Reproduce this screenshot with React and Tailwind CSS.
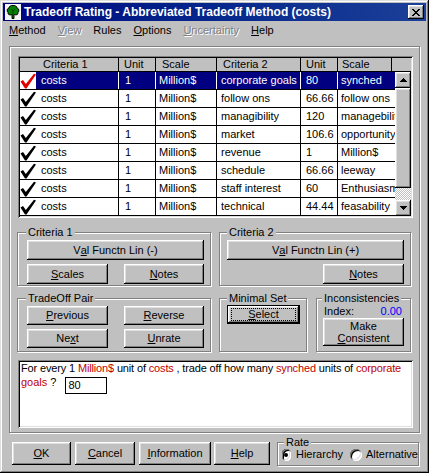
import React from "react";

const raised =
  "bg-[#c0c0c0] shadow-[inset_-1px_-1px_#000,inset_1px_1px_#fff,inset_-2px_-2px_#808080,inset_2px_2px_#dfdfdf]";
const sunken =
  "shadow-[inset_1px_1px_#808080,inset_-1px_-1px_#fff,inset_2px_2px_#000,inset_-2px_-2px_#dfdfdf]";
const etched = "border border-[#808080] shadow-[inset_1px_1px_#fff,1px_1px_#fff]";
const disabled = "text-[#808080] [text-shadow:1px_1px_#fff]";

const rows = [
  { c2: "corporate goals", u2: "80", s2: "synched", sel: true },
  { c2: "follow ons", u2: "66.66", s2: "follow ons" },
  { c2: "managibility", u2: "120", s2: "managebility" },
  { c2: "market", u2: "106.6", s2: "opportunity" },
  { c2: "revenue", u2: "1", s2: "Million$" },
  { c2: "schedule", u2: "66.66", s2: "leeway" },
  { c2: "staff interest", u2: "60", s2: "Enthusiasm" },
  { c2: "technical", u2: "44.44", s2: "feasability" },
];

function Btn({ className = "", children }) {
  return (
    <div className={`${raised} flex items-center justify-center text-black ${className}`}>
      {children}
    </div>
  );
}

function Group({ label, className = "", labelClass = "ml-[8px]", children }) {
  return (
    <div className={`${etched} ${className}`}>
      <div className={`-mt-[7px] ${labelClass} w-fit px-[2px] bg-[#c0c0c0] leading-[13px]`}>{label}</div>
      {children}
    </div>
  );
}

function Check({ red }) {
  return (
    <svg width="16" height="16" viewBox="0 0 16 16">
      <path
        d="M0.5 8.5 L3 7 L5.8 11 L14 0.8 L16 1.5 L6.5 15.5 L5 15.5 Z"
        fill={red ? "#e00000" : "#000"}
      />
    </svg>
  );
}

function Arrow({ down }) {
  return (
    <svg width="7" height="4" viewBox="0 0 7 4" shapeRendering="crispEdges">
      <path
        d={
          down
            ? "M0 0h7v1H0zM1 1h5v1H1zM2 2h3v1H2zM3 3h1v1H3z"
            : "M3 0h1v1H3zM2 1h3v1H2zM1 2h5v1H1zM0 3h7v1H0z"
        }
        fill="#000"
      />
    </svg>
  );
}

function Radio({ checked }) {
  return (
    <div className="w-[12px] h-[12px] rounded-full bg-white shadow-[inset_1px_1px_#808080,inset_-1px_-1px_#fff,inset_2px_2px_#000,inset_-2px_-2px_#dfdfdf] flex items-center justify-center">
      {checked && <div className="w-[4px] h-[4px] rounded-full bg-black" />}
    </div>
  );
}

function Row({ r }) {
  const cell = r.sel ? "bg-[#000080] text-white border-r border-white" : "border-r border-black";
  const last = r.sel ? "bg-[#000080] text-white" : "";
  return (
    <div className="flex h-[18px] border-b border-black bg-white leading-[17px] whitespace-nowrap">
      <div className="w-[16px] flex items-center justify-center bg-white">
        <Check red={r.sel} />
      </div>
      <div className={`w-[83px] pl-[5px] ${cell}`}>costs</div>
      <div className={`w-[37px] pl-[6px] ${cell}`}>1</div>
      <div className={`w-[61px] pl-[3px] ${cell}`}>Million$</div>
      <div className={`w-[84px] pl-[4px] overflow-hidden ${cell}`}>{r.c2}</div>
      <div className={`w-[37px] pl-[5px] overflow-hidden ${cell}`}>{r.u2}</div>
      <div className={`w-[57px] pl-[3px] overflow-hidden ${last}`}>{r.s2}</div>
    </div>
  );
}

function Table() {
  return (
    <div className={`ml-[8px] w-[395px] h-[162px] p-[2px] bg-white ${sunken}`}>
      <div className="flex h-[14px] border-b border-black bg-[#c0c0c0] leading-[13px] whitespace-nowrap">
        <div className="w-[99px] pl-[23px] border-r border-black">Criteria 1</div>
        <div className="w-[37px] pl-[5px] border-r border-black">Unit</div>
        <div className="w-[61px] pl-[6px] border-r border-black">Scale</div>
        <div className="w-[84px] pl-[6px] border-r border-black">Criteria 2</div>
        <div className="w-[37px] pl-[5px] border-r border-black">Unit</div>
        <div className="w-[54px] pl-[4px] border-r border-black">Scale</div>
        <div className="w-[19px]" />
      </div>
      <div className="flex">
        <div className="w-[375px]">
          {rows.map((r, i) => (
            <Row key={i} r={r} />
          ))}
        </div>
        <div className="w-[16px] flex flex-col">
          <Btn className="h-[16px]">
            <Arrow />
          </Btn>
          <Btn className="h-[100px]" />
          <div className="h-[12px] bg-[repeating-conic-gradient(#fff_0_25%,#c0c0c0_0_50%)] bg-[length:2px_2px]" />
          <Btn className="h-[16px]">
            <Arrow down />
          </Btn>
        </div>
      </div>
    </div>
  );
}

function TreeIcon() {
  return (
    <svg width="16" height="16" viewBox="0 0 16 16">
      <rect x="0" y="0" width="16" height="16" fill="#f4f4f4" />
      <path
        d="M8 1.5 C10 1 12 2.5 12 4 C14 4.5 14.5 7 13 8.5 C13.5 10.5 11 11.5 9.5 10.5 L9 10.5 L9 14.5 L7 14.5 L7 10.5 C5 11.5 2.5 10.5 3 8.5 C1.5 7 2 4.5 4 4 C4 2.5 6 1 8 1.5 Z"
        fill="#008000"
        stroke="#000"
        strokeWidth="1"
      />
      <path d="M6 5 L8 7 M10 5 L8 7 M8 7 L8 12" stroke="#003000" strokeWidth="0.8" fill="none" />
    </svg>
  );
}

function CloseX() {
  return (
    <svg width="8" height="7" viewBox="0 0 8 7" shapeRendering="crispEdges">
      <path
        d="M0 0h2v1H0zM6 0h2v1H6zM1 1h2v1H1zM5 1h2v1H5zM2 2h4v1H2zM3 3h2v1H3zM2 4h4v1H2zM1 5h2v1H1zM5 5h2v1H5zM0 6h2v1H0zM6 6h2v1H6z"
        fill="#000"
      />
    </svg>
  );
}

export default function App() {
  return (
    <div className="w-[429px] h-[473px] bg-[#c0c0c0] p-[3px] overflow-hidden text-[11px] text-black font-['Liberation_Sans',Arial,sans-serif] shadow-[inset_-1px_-1px_#000,inset_1px_1px_#dfdfdf,inset_-2px_-2px_#808080,inset_2px_2px_#fff]">
      {/* Title bar */}
      <div className="h-[18px] flex items-center bg-gradient-to-r from-[#000080] to-[#1c3f98] pl-[2px] pr-[2px]">
        <TreeIcon />
        <div className="ml-[3px] text-white font-bold text-[12px] leading-[16px] whitespace-nowrap">
          Tradeoff Rating - Abbreviated Tradeoff Method (costs)
        </div>
        <Btn className="ml-auto w-[16px] h-[14px]">
          <CloseX />
        </Btn>
      </div>

      {/* Menu */}
      <div className="h-[18px] flex items-center whitespace-nowrap">
        <div className="px-[6px]"><u>M</u>ethod</div>
        <div className={`px-[6px] ${disabled}`}><u>V</u>iew</div>
        <div className="px-[6px]">Rules</div>
        <div className="px-[6px]"><u>O</u>ptions</div>
        <div className={`px-[6px] ${disabled}`}><u>U</u>ncertainty</div>
        <div className="px-[6px]"><u>H</u>elp</div>
      </div>

      {/* Main frame */}
      <div className={`ml-[6px] mt-[7px] w-[411px] h-[387px] pt-[9px] ${etched}`}>
        <Table />

        <div className="flex ml-[7px] mt-[14px]">
          <Group label="Criteria 1" className="w-[194px] h-[54px]">
            <Btn className="mt-[1px] ml-[9px] w-[177px] h-[20px]">
              V<u>a</u>l Functn Lin (-)
            </Btn>
            <div className="mt-[4px] ml-[9px] flex gap-[16px]">
              <Btn className="w-[81px] h-[20px]">
                <u>S</u>cales
              </Btn>
              <Btn className="w-[80px] h-[20px]">
                <u>N</u>otes
              </Btn>
            </div>
          </Group>
          <Group label="Criteria 2" labelClass="ml-[7px]" className="ml-[8px] w-[192px] h-[54px]">
            <Btn className="mt-[1px] ml-[7px] w-[177px] h-[20px]">
              V<u>a</u>l Functn Lin (+)
            </Btn>
            <Btn className="mt-[4px] ml-[103px] w-[81px] h-[20px]">
              <u>N</u>otes
            </Btn>
          </Group>
        </div>

        <div className="flex ml-[7px] mt-[12px]">
          <Group label="TradeOff Pair" className="w-[194px] h-[54px]">
            <div className="mt-[1px] ml-[9px] flex gap-[16px]">
              <Btn className="w-[81px] h-[19px]">
                <u>P</u>revious
              </Btn>
              <Btn className="w-[80px] h-[19px]">
                <u>R</u>everse
              </Btn>
            </div>
            <div className="mt-[4px] ml-[9px] flex gap-[16px]">
              <Btn className="w-[81px] h-[19px]">
                Ne<u>x</u>t
              </Btn>
              <Btn className="w-[80px] h-[19px]">
                <u>U</u>nrate
              </Btn>
            </div>
          </Group>
          <Group label="Minimal Set" labelClass="ml-[7px]" className="ml-[8px] w-[88px] h-[54px]">
            <div className="ml-[7px] w-[73px] h-[19px] border border-black">
              <div className={`w-full h-full px-[3px] py-[2px] ${raised}`}>
                <div className="w-full h-full border border-dotted border-black flex items-center justify-center leading-[11px]">
                  <u>S</u>elect
                </div>
              </div>
            </div>
          </Group>
          <Group label="Inconsistencies" labelClass="ml-[5px]" className="ml-[9px] w-[95px] h-[54px]">
            <div className="flex justify-between pl-[7px] pr-[8px] h-[13px] leading-[13px]">
              <span>Index:</span>
              <span className="text-[#0000ff]">0.00</span>
            </div>
            <Btn className="ml-[6px] w-[81px] h-[28px] flex-col leading-[12px]">
              <span>Make</span>
              <span>
                <u>C</u>onsistent
              </span>
            </Btn>
          </Group>
        </div>

        {/* Question text */}
        <div className={`ml-[8px] mt-[8px] w-[395px] h-[68px] p-[2px] bg-white ${sunken}`}>
          <div className="pl-[1px] leading-[13px] whitespace-nowrap tracking-[-0.15px]">
            For every 1 <span className="text-[#c00000]">Million$</span> unit of{" "}
            <span className="text-[#c00000]">costs</span> , trade off how many{" "}
            <span className="text-[#c00000]">synched</span> units of{" "}
            <span className="text-[#c00000]">corporate</span>
          </div>
          <div className="pl-[1px] flex items-start">
            <span className="leading-[13px] mt-[1px]">
              <span className="text-[#c00000]">goals</span> ?
            </span>
            <span className="ml-[9px] mt-[2px] w-[42px] h-[17px] border border-black bg-white pl-[2px] leading-[15px]">
              80
            </span>
          </div>
        </div>
      </div>

      {/* Bottom buttons */}
      <div className="flex items-start mt-[9px] ml-[9px]">
        <Btn className="w-[59px] h-[23px]">
          <u>O</u>K
        </Btn>
        <Btn className="ml-[4px] w-[60px] h-[23px]">
          <u>C</u>ancel
        </Btn>
        <Btn className="ml-[4px] w-[72px] h-[23px]">
          <u>I</u>nformation
        </Btn>
        <Btn className="ml-[3px] w-[56px] h-[23px]">
          <u>H</u>elp
        </Btn>
        <Group label="Rate" labelClass="ml-[6px]" className="ml-[7px] w-[142px] h-[24px]">
          <div className="-mt-[1px] ml-[4px] flex items-center h-[13px] leading-[13px] whitespace-nowrap">
            <Radio checked />
            <span className="ml-[5px]">Hierarchy</span>
            <div className="ml-[7px]">
              <Radio />
            </div>
            <span className="ml-[4px]">Alternative</span>
          </div>
        </Group>
      </div>
    </div>
  );
}
